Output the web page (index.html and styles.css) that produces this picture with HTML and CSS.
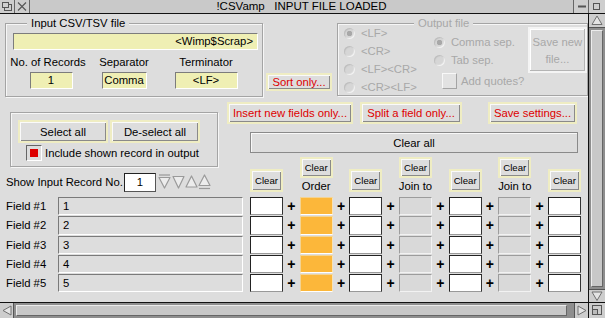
FILE: index.html
```html
<!DOCTYPE html>
<html lang="en">
<head>
  <meta charset="UTF-8">
  <title>!CSVamp</title>
  <link rel="stylesheet" href="styles.css">
</head>
<body>
  <div class="window">
    <div class="titlebar">
      <div class="tb-icon back">
        <svg width="14" height="13" viewBox="0 0 14 13"><rect x="4.5" y="4.5" width="7" height="6" fill="none" stroke="#555"/><rect x="2.5" y="2.5" width="6" height="5" fill="#cfcfcf" stroke="#555"/></svg>
      </div>
      <div class="tb-icon close">
        <svg width="14" height="13" viewBox="0 0 14 13"><path d="M3 2.5 L11 10.5 M11 2.5 L3 10.5" stroke="#555" stroke-width="1.1"/></svg>
      </div>
      <div class="title">!CSVamp&nbsp;&nbsp; INPUT FILE LOADED</div>
      <div class="tb-icon iconise">
        <svg width="15" height="13" viewBox="0 0 15 13"><rect x="4" y="5.5" width="8" height="2" fill="#555"/></svg>
      </div>
      <div class="tb-icon toggle">
        <svg width="16" height="13" viewBox="0 0 16 13"><rect x="4.5" y="3.5" width="6" height="6" fill="none" stroke="#555"/></svg>
      </div>
    </div>

    <div class="main">
      <div class="work">
        <div class="top">
          <fieldset class="group input-group">
            <legend>Input CSV/TSV file</legend>
            <div class="field yellow path">&lt;Wimp$Scrap&gt;</div>
            <div class="stats">
              <div class="stat s1"><span>No. of Records</span><div class="field yellow">1</div></div>
              <div class="stat s2"><span>Separator</span><div class="field yellow">Comma</div></div>
              <div class="stat s3"><span>Terminator</span><div class="field yellow">&lt;LF&gt;</div></div>
            </div>
          </fieldset>

          <div class="btn red sort">Sort only...</div>

          <fieldset class="group output-group">
            <legend>Output file</legend>
            <div class="out-body">
              <div class="radios">
                <div class="rrow"><div class="radio on"></div><span>&lt;LF&gt;</span></div>
                <div class="rrow"><div class="radio"></div><span>&lt;CR&gt;</span></div>
                <div class="rrow"><div class="radio"></div><span>&lt;LF&gt;&lt;CR&gt;</span></div>
                <div class="rrow"><div class="radio"></div><span>&lt;CR&gt;&lt;LF&gt;</span></div>
              </div>
              <div class="seps">
                <div class="rrow"><div class="radio on"></div><span>Comma sep.</span></div>
                <div class="rrow"><div class="radio"></div><span>Tab sep.</span></div>
                <div class="check-row"><div class="check"></div><span>Add quotes?</span></div>
              </div>
              <div class="save">Save new<br>file...</div>
            </div>
          </fieldset>
        </div>

        <div class="mid">
          <div class="mid-left">
            <div class="select-box">
              <div class="sel-btns">
                <div class="btn">Select all</div>
                <div class="btn">De-select all</div>
              </div>
              <div class="include">
                <div class="tick"><i></i></div>
                <span>Include shown record in output</span>
              </div>
            </div>
            <div class="show-row">
              <span>Show Input Record No.</span>
              <div class="recno">1</div>
              <svg class="stepper" width="54" height="16" viewBox="0 0 54 16">
                <g fill="#ececec" stroke="#9a9a9a" stroke-width="1.2" stroke-linejoin="round">
                  <path d="M1 1 H12" fill="none"/>
                  <polygon points="1,3.5 12,3.5 6.5,14"/>
                  <polygon points="15,2.5 26,2.5 20.5,14"/>
                  <polygon points="28,13 39,13 33.5,2"/>
                  <polygon points="41,11.5 52,11.5 46.5,1"/>
                  <path d="M41 14.5 H52" fill="none"/>
                </g>
              </svg>
            </div>
          </div>

          <div class="mid-right">
            <div class="act-row">
              <div class="btn red b-insert">Insert new fields only...</div>
              <div class="btn red b-split">Split a field only...</div>
              <div class="btn red b-save">Save settings...</div>
            </div>
            <div class="clear-all">Clear all</div>
            <div class="heads">
              <div class="head low"><div class="btn clear">Clear</div></div>
              <div></div>
              <div class="head up"><div class="btn clear">Clear</div><span>Order</span></div>
              <div></div>
              <div class="head low"><div class="btn clear">Clear</div></div>
              <div></div>
              <div class="head up"><div class="btn clear">Clear</div><span>Join to</span></div>
              <div></div>
              <div class="head low"><div class="btn clear">Clear</div></div>
              <div></div>
              <div class="head up"><div class="btn clear">Clear</div><span>Join to</span></div>
              <div></div>
              <div class="head low"><div class="btn clear">Clear</div></div>
            </div>
          </div>
        </div>

        <div class="fields">
          <div class="flabel">Field #1</div><div class="ftext">1</div><div></div>
          <div class="box white"></div><div class="plus">+</div>
          <div class="box orange"></div><div class="plus">+</div>
          <div class="box white"></div><div class="plus">+</div>
          <div class="box grey"></div><div class="plus">+</div>
          <div class="box white"></div><div class="plus">+</div>
          <div class="box grey"></div><div class="plus">+</div>
          <div class="box white"></div>

          <div class="flabel">Field #2</div><div class="ftext">2</div><div></div>
          <div class="box white"></div><div class="plus">+</div>
          <div class="box orange"></div><div class="plus">+</div>
          <div class="box white"></div><div class="plus">+</div>
          <div class="box grey"></div><div class="plus">+</div>
          <div class="box white"></div><div class="plus">+</div>
          <div class="box grey"></div><div class="plus">+</div>
          <div class="box white"></div>

          <div class="flabel">Field #3</div><div class="ftext">3</div><div></div>
          <div class="box white"></div><div class="plus">+</div>
          <div class="box orange"></div><div class="plus">+</div>
          <div class="box white"></div><div class="plus">+</div>
          <div class="box grey"></div><div class="plus">+</div>
          <div class="box white"></div><div class="plus">+</div>
          <div class="box grey"></div><div class="plus">+</div>
          <div class="box white"></div>

          <div class="flabel">Field #4</div><div class="ftext">4</div><div></div>
          <div class="box white"></div><div class="plus">+</div>
          <div class="box orange"></div><div class="plus">+</div>
          <div class="box white"></div><div class="plus">+</div>
          <div class="box grey"></div><div class="plus">+</div>
          <div class="box white"></div><div class="plus">+</div>
          <div class="box grey"></div><div class="plus">+</div>
          <div class="box white"></div>

          <div class="flabel">Field #5</div><div class="ftext">5</div><div></div>
          <div class="box white"></div><div class="plus">+</div>
          <div class="box orange"></div><div class="plus">+</div>
          <div class="box white"></div><div class="plus">+</div>
          <div class="box grey"></div><div class="plus">+</div>
          <div class="box white"></div><div class="plus">+</div>
          <div class="box grey"></div><div class="plus">+</div>
          <div class="box white"></div>
        </div>
      </div>

      <div class="vscroll">
        <div class="sc-up">
          <svg width="16" height="13" viewBox="0 0 16 13"><polygon points="3,10.5 13,10.5 8,2" fill="#e4e4e4" stroke="#707070"/></svg>
        </div>
        <div class="vthumb"></div>
        <div class="sc-down">
          <svg width="16" height="12" viewBox="0 0 16 12"><polygon points="3,2 13,2 8,10.5" fill="#e4e4e4" stroke="#707070"/></svg>
        </div>
      </div>
    </div>

    <div class="hbar">
      <div class="sc-left">
        <svg width="14" height="15" viewBox="0 0 14 15"><polygon points="11,3 11,12 3,7.5" fill="#e4e4e4" stroke="#707070"/></svg>
      </div>
      <div class="hthumb"></div>
      <div class="sc-right">
        <svg width="14" height="15" viewBox="0 0 14 15"><polygon points="3,3 3,12 11,7.5" fill="#e4e4e4" stroke="#707070"/></svg>
      </div>
      <div class="corner">
        <svg width="16" height="15" viewBox="0 0 16 15"><rect x="3.5" y="2.5" width="9" height="9" fill="none" stroke="#555"/><rect x="3.5" y="6.5" width="5" height="5" fill="#bbb" stroke="#555"/></svg>
      </div>
    </div>
  </div>
</body>
</html>
```

FILE: styles.css
```css
* {
  margin: 0;
  padding: 0;
  box-sizing: border-box;
}
body {
  width: 605px;
  height: 318px;
  overflow: hidden;
  background: #dddddd;
  font-family: "Liberation Sans", Arial, sans-serif;
  font-size: 11.3px;
  color: #000;
  white-space: nowrap;
}
.window {
  width: 605px;
  height: 318px;
  display: flex;
  flex-direction: column;
}

/* title bar */
.titlebar {
  height: 14px;
  display: flex;
  background: #c9c9c9;
  border-bottom: 1px solid #111;
}
.tb-icon {
  width: 15px;
  height: 13px;
  background: #cecece;
  border-right: 1px solid #666;
}
.tb-icon svg {
  display: block;
}
.title {
  flex: 1;
  text-align: center;
  line-height: 13px;
  font-size: 11.5px;
}
.tb-icon.iconise {
  width: 16px;
  border-left: 1px solid #666;
}
.tb-icon.toggle {
  width: 16px;
  border-right: 0;
}

.main {
  flex: 1;
  display: flex;
  min-height: 0;
}
.work {
  flex: 1;
  overflow: hidden;
}

/* group boxes */
fieldset.group {
  border: 1px solid #a4a4a4;
  box-shadow: inset 1px 1px 0 #f6f6f6, 1px 1px 0 #f6f6f6;
  min-width: 0;
  margin-top: 4px;
}
legend {
  margin-left: 17px;
  padding: 0 4px;
  line-height: 10px;
  background: #dddddd;
}

.top {
  display: flex;
  align-items: flex-start;
  height: 83px;
}
.input-group {
  margin-left: 5px;
  width: 259px;
  height: 79px;
  padding-left: 4px;
}
.field {
  height: 17px;
  line-height: 15px;
  border: 1px solid;
  border-color: #7c7c7c #fff #fff #7c7c7c;
}
.yellow {
  background: #efefb4;
}
.path {
  margin: 5px 0 0 3px;
  width: 245px;
  text-align: right;
  padding-right: 4px;
}
.stats {
  display: flex;
  margin-top: 5px;
}
.stat {
  display: flex;
  flex-direction: column;
  align-items: center;
}
.stat span {
  line-height: 14px;
}
.stat .field {
  margin-top: 3px;
  text-align: center;
}
.s1 { width: 76px; }
.s1 .field { width: 43px; margin-left: 6px; }
.s2 { width: 60px; margin-left: 8px; }
.s2 .field { width: 45px; }
.s3 { width: 80px; margin-left: 12px; }
.s3 .field { width: 63px; }

/* buttons */
.btn {
  background: #dddddd;
  border: 2px solid #efedc3;
  box-shadow: inset 1px 1px 0 #fafafa, inset -1px -1px 0 #8a8a8a;
  display: flex;
  align-items: center;
  justify-content: center;
}
.red {
  color: #dd0000;
}
.sort {
  margin: 59px 0 0 3px;
  width: 66px;
  height: 18px;
}

/* output (greyed) */
.output-group {
  margin-left: 5px;
  width: 252px;
  height: 78px;
  padding-left: 6px;
  color: #a8a8a8;
}
.output-group legend {
  margin-left: 70px;
}
.out-body {
  display: flex;
  align-items: flex-start;
}
.radios {
  width: 90px;
}
.rrow {
  display: flex;
  align-items: center;
  height: 10px;
  margin-bottom: 8px;
}
.radio {
  width: 11px;
  height: 11px;
  flex: none;
  border-radius: 50%;
  background: #d6d6d6;
  box-shadow: inset 1px 1px 1px #bdbdbd, inset -1px -1px 1px #f4f4f4;
}
.radio.on {
  background: radial-gradient(circle, #a8a8a8 0 2.5px, #d6d6d6 3px);
}
.rrow span {
  margin-left: 6px;
  line-height: 10px;
}
.seps {
  width: 94px;
  padding-top: 9px;
}
.check-row {
  display: flex;
  align-items: center;
  margin: 2px 0 0 8px;
}
.check {
  width: 15px;
  height: 16px;
  background: #e2e2e2;
  border: 1px solid;
  border-color: #f8f8f8 #a4a4a4 #a4a4a4 #f8f8f8;
}
.check-row span {
  margin-left: 4px;
}
.save {
  width: 59px;
  height: 46px;
  margin-top: -1px;
  padding-top: 5px;
  background: #dedede;
  border: 2px solid #f4f4f4;
  box-shadow: inset -1px -1px 0 #b4b4b4, inset 1px 1px 0 #fff;
  text-align: center;
  line-height: 17px;
}

/* middle */
.mid {
  display: flex;
  height: 98px;
}
.mid-left {
  width: 227px;
}
.select-box {
  margin: 15px 0 0 10px;
  width: 208px;
  height: 55px;
  padding: 7px 0 0 7px;
  border: 1px solid #a4a4a4;
  box-shadow: inset 1px 1px 0 #f6f6f6, 1px 1px 0 #f6f6f6;
}
.sel-btns {
  display: flex;
  gap: 2px;
}
.sel-btns .btn {
  width: 90px;
  height: 23px;
}
.include {
  display: flex;
  align-items: center;
  margin: 2px 0 0 8px;
}
.tick {
  width: 16px;
  height: 16px;
  border: 1px solid;
  border-color: #666 #fff #fff #666;
  display: flex;
  align-items: center;
  justify-content: center;
}
.tick i {
  width: 8px;
  height: 8px;
  background: #dd0000;
}
.include span {
  margin-left: 3px;
}
.show-row {
  display: flex;
  align-items: center;
  margin: 5px 0 0 6px;
  height: 20px;
}
.show-row span {
  width: 118px;
}
.recno {
  width: 32px;
  height: 19px;
  background: #fff;
  border: 1px solid;
  border-color: #222 #555 #555 #222;
  text-align: center;
  line-height: 17px;
}
.stepper {
  margin-left: 2px;
}

.mid-right {
  flex: 1;
}
.act-row {
  display: flex;
  margin-top: 5px;
}
.act-row .btn {
  height: 22px;
}
.b-insert { width: 126px; }
.b-split { width: 102px; margin-left: 7px; }
.b-save { width: 89px; margin-left: 26px; }
.clear-all {
  margin: 8px 0 0 23px;
  width: 328px;
  height: 21px;
  border: 1px solid #8a8a8a;
  box-shadow: inset 1px 1px 0 #f8f8f8;
  display: flex;
  align-items: center;
  justify-content: center;
}
.heads {
  margin-left: 23px;
  height: 42px;
  display: grid;
  grid-template-columns: repeat(6, 33px 16.67px) 33px;
  align-items: end;
}
.head {
  display: flex;
  flex-direction: column;
  align-items: center;
}
.clear {
  width: 33px;
  height: 23px;
  font-size: 9.6px;
}
.head.low {
  margin-bottom: 3px;
}
.head.up .clear {
  height: 21px;
  margin-bottom: 1px;
}
.head.up span {
  line-height: 14px;
  margin-bottom: 2px;
}

/* field rows */
.fields {
  display: grid;
  margin: 2px 0 0 6px;
  grid-template-columns: 52px 185px 7px repeat(6, 33px 16.67px) 33px;
  grid-auto-rows: 18.3px;
  row-gap: 1px;
}
.flabel {
  line-height: 18px;
}
.ftext {
  border: 1px solid;
  border-color: #7a7a7a #fff #fff #7a7a7a;
  padding-left: 4px;
  line-height: 16px;
}
.box {
  border: 1px solid;
}
.white {
  background: #fff;
  border-color: #222 #333 #999 #222;
}
.orange {
  background: #fcb73a;
  border-color: #f3d393 #f8e2b4 #fff #f3d393;
}
.grey {
  background: #d9d9d9;
  border-color: #9c9c9c #f2f2f2 #f2f2f2 #9c9c9c;
}
.plus {
  text-align: center;
  font-weight: bold;
  font-size: 14px;
  line-height: 19px;
}

/* scroll bars */
.vscroll {
  width: 17px;
  background: #8e8e8e;
  border-left: 1px solid #111;
  display: flex;
  flex-direction: column;
  align-items: center;
}
.vscroll svg,
.hbar svg {
  display: block;
}
.sc-up {
  width: 16px;
  height: 14px;
  background: #cdcdcd;
  border-bottom: 1px solid #555;
}
.vthumb {
  flex: 1;
  width: 12px;
  margin: 2px 0;
  background: #c8c8c8;
  border: 1px solid;
  border-color: #ececec #666 #666 #ececec;
}
.sc-down {
  width: 16px;
  height: 13px;
  background: #cdcdcd;
  border-top: 1px solid #555;
}
.hbar {
  height: 16px;
  display: flex;
  background: #8e8e8e;
  border-top: 1px solid #111;
}
.sc-left {
  width: 14px;
  background: #cdcdcd;
  border-right: 1px solid #555;
}
.hthumb {
  flex: 1;
  margin: 2px 7px 2px 2px;
  background: #c8c8c8;
  border: 1px solid;
  border-color: #ececec #666 #666 #ececec;
}
.sc-right {
  width: 14px;
  background: #cdcdcd;
  border-left: 1px solid #555;
}
.corner {
  width: 17px;
  background: #cdcdcd;
  border-left: 1px solid #111;
}
```
